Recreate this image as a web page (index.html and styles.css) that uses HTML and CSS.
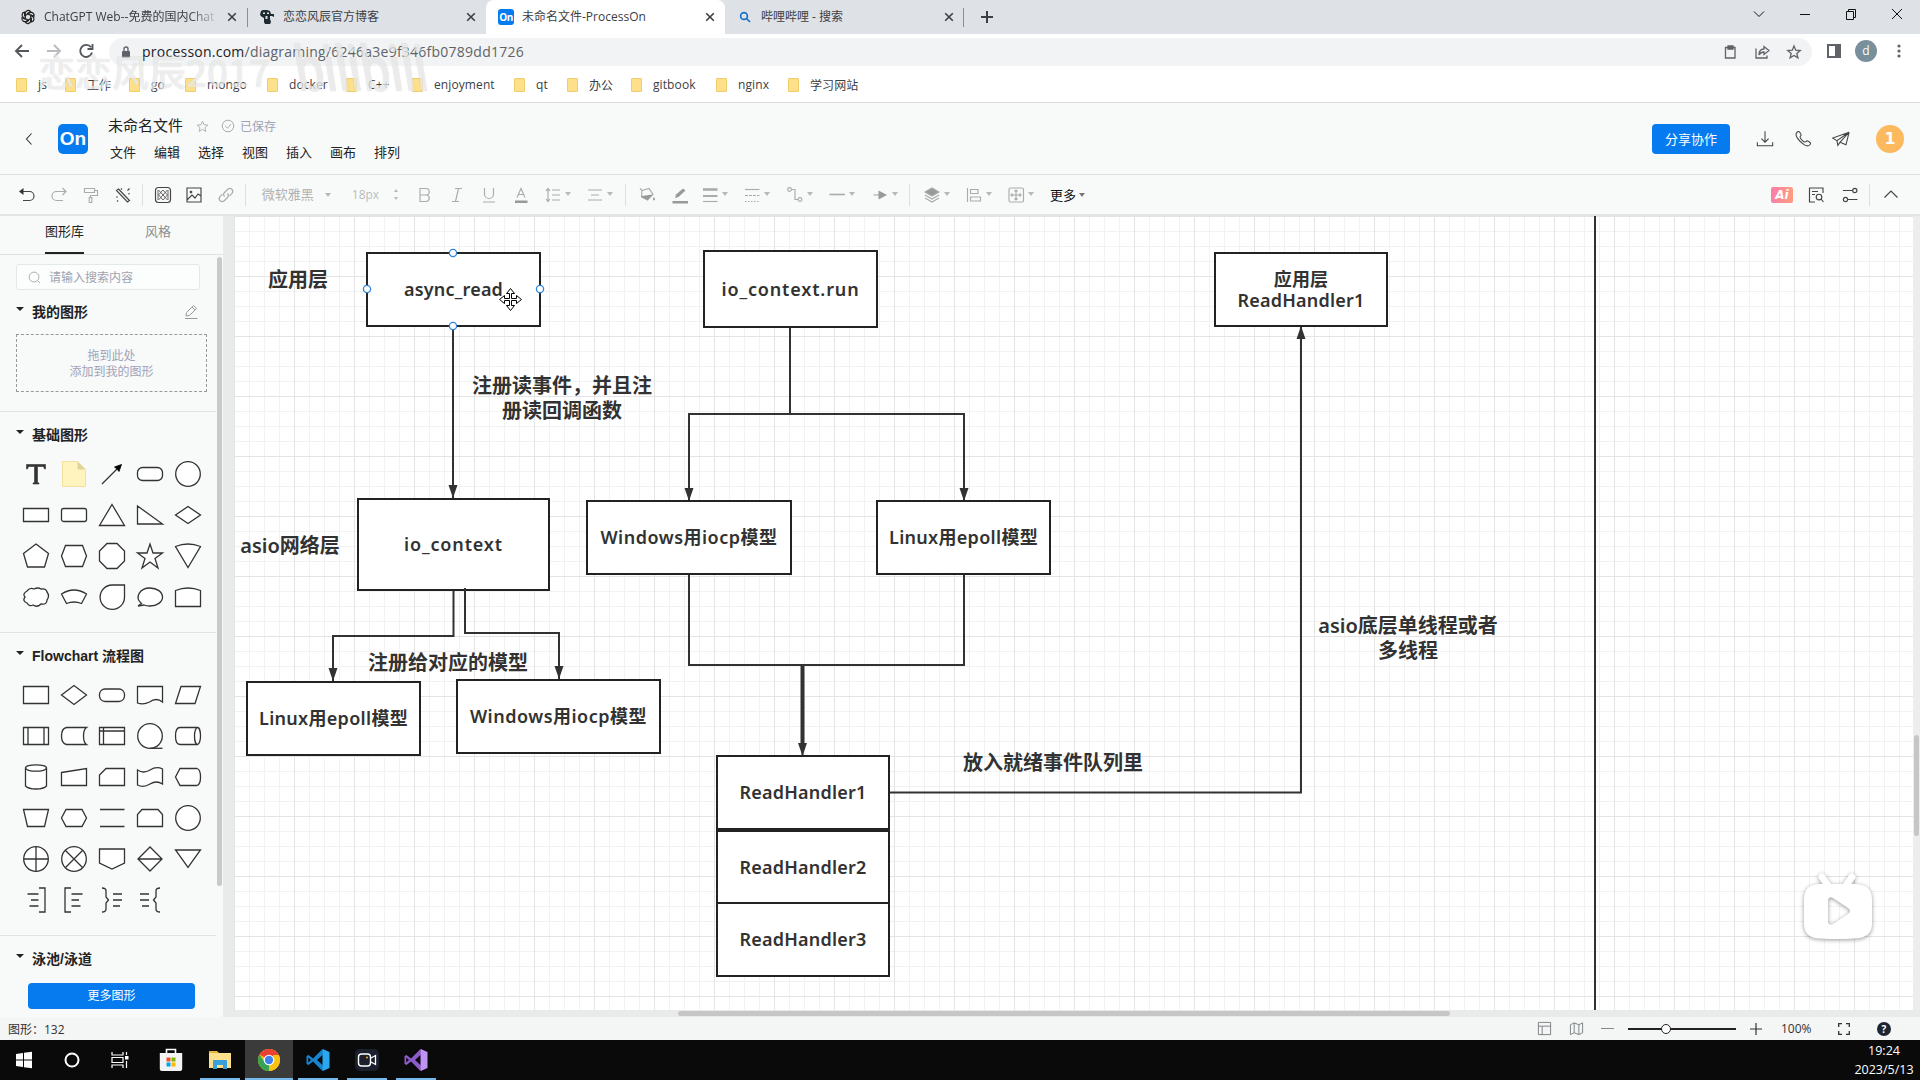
FILE: index.html
```html
<!DOCTYPE html>
<html lang="zh-CN">
<head>
<meta charset="utf-8">
<title>未命名文件-ProcessOn</title>
<link rel="stylesheet" href="styles.css">
</head>
<body>
<div class="screen">
  <div class="tabstrip">
    <div class="tab">
      <svg class="fav" viewBox="0 0 16 16"><g class="dark" stroke-width="1.2"><path id="petal" d="M5.300 9.500V4.300a2.900 2.900 0 0 1 5.200-1.700L7 4.700"/><use href="#petal" transform="rotate(60 8 8)"/><use href="#petal" transform="rotate(120 8 8)"/><use href="#petal" transform="rotate(180 8 8)"/><use href="#petal" transform="rotate(240 8 8)"/><use href="#petal" transform="rotate(300 8 8)"/></g></svg>
      <span class="tab-title fade">ChatGPT Web--免费的国内Chat</span>
      <svg class="close" viewBox="0 0 10 10"><path d="M1.200 1.200l7.600 7.600M8.800 1.200L1.200 8.800"/></svg>
    </div>
    <div class="tab divided">
      <svg class="fav" viewBox="0 0 16 16"><path fill="#1d2a30" d="M2 2l2-1h4l3 1 1 3 3 0v3l-2-1-2 0 0 3 1 3-1 2H6l-1-2V9L3 8 1 6z"/><path fill="#dee1e6" d="M4 3.500h2v1.500H4zM8 3.500h2v1.500H8zM6.500 7h2v3h-2z"/></svg>
      <span class="tab-title">恋恋风辰官方博客</span>
      <svg class="close" viewBox="0 0 10 10"><path d="M1.200 1.200l7.600 7.600M8.800 1.200L1.200 8.800"/></svg>
    </div>
    <div class="tab active">
      <span class="fav on-mini">On</span>
      <span class="tab-title">未命名文件-ProcessOn</span>
      <svg class="close" viewBox="0 0 10 10"><path d="M1.200 1.200l7.600 7.600M8.800 1.200L1.200 8.800"/></svg>
    </div>
    <div class="tab last">
      <svg class="fav" viewBox="0 0 16 16"><g fill="none" stroke="#1a73c8" stroke-width="1.7"><circle cx="7" cy="7" r="3.400"/><path d="M9.500 9.500l3.500 3.500"/></g></svg>
      <span class="tab-title">哔哩哔哩 - 搜索</span>
      <svg class="close" viewBox="0 0 10 10"><path d="M1.200 1.200l7.600 7.600M8.800 1.200L1.200 8.800"/></svg>
    </div>
    <svg class="newtab" viewBox="0 0 14 14"><path d="M7 1v12M1 7h12" stroke="#3c4043" stroke-width="2"/></svg>
    <div class="winctl">
      <svg viewBox="0 0 12 12"><path d="M1 3.500l5 5 5-5"/></svg>
      <svg viewBox="0 0 12 12"><path d="M1 6.500h10"/></svg>
      <svg viewBox="0 0 12 12"><path d="M1.500 3.500h7v8h-7zM3.500 3.500v-2h7v8h-2"/></svg>
      <svg viewBox="0 0 12 12"><path d="M1 1l10 10M11 1L1 11"/></svg>
    </div>
  </div>

  <div class="navbar">
    <svg class="nav" viewBox="0 0 16 16"><path d="M15 8H2M8 2L2 8l6 6"/></svg>
    <svg class="nav off" viewBox="0 0 16 16"><path d="M1 8h13M8 2l6 6-6 6"/></svg>
    <svg class="nav" viewBox="0 0 16 16"><path d="M13 4.300A6 6 0 1 0 14 9.500M14.500 1v5h-5"/></svg>
    <div class="omnibox">
      <svg class="lock" viewBox="0 0 10 12"><rect x="1" y="5" width="8" height="7" rx="1" fill="#5f6368"/><path d="M3 5V3a2 2 0 0 1 4 0v2" fill="none" stroke="#5f6368" stroke-width="1.400"/></svg>
      <span class="url"><b>processon.com</b>/diagraming/6246a3e9f346fb0789dd1726</span>
      <div class="omni-icons">
        <svg viewBox="0 0 16 16"><path d="M3.500 3.500h9.500v10.500H3.500z"/><path d="M6 2h5v3H6z" fill="#5f6368"/></svg>
        <svg viewBox="0 0 16 16"><path d="M2 4.500V14h11v-2.500M5 11c0-4 2-6 5-6V2.500l5 4-5 4V8c-2 0-4 1-5 3z"/></svg>
        <svg viewBox="0 0 16 16"><path d="M8 2l1.700 4.200 4.500.300-3.400 2.900 1.100 4.400L8 11.400l-3.900 2.400 1.100-4.400L1.800 6.500l4.500-.3z"/></svg>
      </div>
    </div>
    <svg class="panel" viewBox="0 0 14 14"><path fill="#5f6368" d="M0 0h14v14H0zM2 2v10h6V2z" fill-rule="evenodd"/></svg>
    <span class="profile">d</span>
    <svg class="dots" viewBox="0 0 4 14"><circle cx="2" cy="2" r="1.600"/><circle cx="2" cy="7" r="1.600"/><circle cx="2" cy="12" r="1.600"/></svg>
  </div>

  <div class="bookmarks">
    <span><i></i>js</span><span><i></i>工作</span><span><i></i>go</span><span><i></i>mongo</span><span><i></i>docker</span><span><i></i>C++</span><span><i></i>enjoyment</span><span><i></i>qt</span><span><i></i>办公</span><span><i></i>gitbook</span><span><i></i>nginx</span><span><i></i>学习网站</span>
  </div>

  <header class="header">
    <svg class="back" viewBox="0 0 8 12"><path d="M6.500 .500L1.500 6l5 5.500"/></svg>
    <div class="logo">On</div>
    <div class="doc">
      <div class="doc-top">
        <span class="doc-name">未命名文件</span>
        <svg class="star" viewBox="0 0 14 14"><path d="M7 1.300l1.700 3.800 4 .4-3 2.800.9 4L7 10.200l-3.600 2.100.9-4-3-2.800 4-.4z"/></svg>
        <svg class="check" viewBox="0 0 14 14"><circle cx="7" cy="7" r="5.800"/><path d="M4.200 7l2.200 2.200 3.600-4"/></svg>
        <span class="saved">已保存</span>
      </div>
      <nav class="menus"><span>文件</span><span>编辑</span><span>选择</span><span>视图</span><span>插入</span><span>画布</span><span>排列</span></nav>
    </div>
    <div class="header-right">
      <button class="share">分享协作</button>
      <svg class="hicon" viewBox="0 0 20 20"><path d="M10 1.500v12M6 9.500l4 4 4-4M1.500 13.500v4h17v-4"/></svg>
      <svg class="hicon" viewBox="0 0 20 20"><path d="M3.600 2.200c1.200-1 2-.7 2.700.3l1.300 2c.6 1 .4 1.700-.4 2.300-1 .8-.6 1.500.2 2.700 1 1.500 2.200 2.700 3.600 3.500 1 .6 1.600.7 2.300-.2.700-.8 1.500-1 2.400-.400l2 1.500c.9.700.9 1.500 0 2.500-1.500 1.600-3.700 1.600-6.200.1C8.500 14.700 5.600 11.800 3.800 9 2 6.400 1.700 3.900 3.600 2.200z"/></svg>
      <svg class="hicon" viewBox="0 0 20 20"><path d="M19 2.500L.8 9l4.700 2.800zM19 2.500L5.500 11.800l1 5.200 2.500-3.500zM19 2.500l-3.500 14L9 13.500"/></svg>
      <span class="avatar">1</span>
    </div>
  </header>

  <div class="toolbar">
    <div class="cells lead">
      <svg class="ic on" viewBox="0 0 20 20"><path d="M3 6.500h9.500a4 4 0 0 1 0 9H6"/><path d="M2 6.500L6.500 3v7z" fill="#333" stroke="none"/></svg>
      <svg class="ic" viewBox="0 0 20 20"><path d="M17 6.500H7.500a4 4 0 0 0 0 9H14M13.500 3L17 6.500 13.500 10"/></svg>
      <svg class="ic" viewBox="0 0 20 20"><path d="M3.500 3.500h10v4h-10zM13.500 5.500h3v5H9.500v2M8.200 12.500h2.600v5H8.200z"/></svg>
      <svg class="ic on" viewBox="0 0 20 20"><path d="M5.500 4l11 11.500-2 1.500L3.500 5.500zM8 3.500l1 1M14.500 5.500l2-2M3.500 11.500l1 1M4 16.500l1-1M16 8v1.500"/></svg>
    </div>
    <i class="sep"></i>
    <div class="cells mid">
      <svg class="ic on" viewBox="0 0 20 20"><rect x="2.500" y="2.500" width="15" height="15" rx="3"/><path stroke-width=".8" d="M5.500 5l9 10M10 5l4.500 5M5.500 10l4.500 5M14.500 5l-9 10M10 5l-4.500 5M14.500 10L10 15M5 5v10M15 5v10"/></svg>
      <svg class="ic on" viewBox="0 0 20 20"><path d="M3 3h14v14H3zM3 15l5-5 3 3 3-4 3 2"/><circle cx="7" cy="7" r=".8"/></svg>
      <svg class="ic" viewBox="0 0 20 20"><path d="M8.500 11.500c-1.500-1.500-1-3 0-4l3-3c3-3 7 1 4.500 3.800l-2.500 2.500M11.500 8.500c1.500 1.500 1 3 0 4l-3 3c-3 3-7-1-4.500-3.800l2.500-2.500"/></svg>
    </div>
    <i class="sep"></i>
    <span class="font-name">微软雅黑</span><i class="caret c-font"></i>
    <span class="font-size">18px</span>
    <span class="spin"><i></i><i></i></span>
    <div class="cells text">
      <svg class="ic" viewBox="0 0 20 20"><path d="M5 3.500h6a3.200 3.200 0 0 1 0 6.500H5zM5 10h6.500a3.300 3.300 0 0 1 0 6.500H5z"/></svg>
      <svg class="ic" viewBox="0 0 20 20"><path d="M8 3.500h7M5 16.500h7M11.500 3.500l-3 13"/></svg>
      <svg class="ic" viewBox="0 0 20 20"><path d="M5.500 3v6a4.500 4.500 0 0 0 9 0V3M4 17h12"/></svg>
      <svg class="ic" viewBox="0 0 20 20"><path d="M6 12.500l4-9 4 9M7.500 9.500h5"/><path d="M4 15.500h12.500v2.500H4z" fill="#999" stroke="none"/></svg>
    </div>
    <div class="cells drop d1">
      <span><svg class="ic" viewBox="0 0 20 20"><path d="M5 4v12M3 6l2-2.500L7 6M3 14l2 2.500L7 14M9 5h8M9 10h8M9 15h8"/></svg><i class="caret"></i></span>
      <span><svg class="ic" viewBox="0 0 20 20"><path d="M3 5h14M6 10h8M3 15h14"/></svg><i class="caret"></i></span>
    </div>
    <i class="sep"></i>
    <div class="cells fill">
      <svg class="ic" viewBox="0 0 20 20"><path d="M5 5.500l7-2 4 6-5.500 5.500-6-3zM5 5.500L3 3.500"/><path d="M4.500 11l11-1.500-5 5.500-6-3zM17 12q2 3 0 3.500-2-.5 0-3.500z" fill="#999" stroke="none"/></svg>
      <svg class="ic" viewBox="0 0 20 20"><path d="M5 13l1-3.500 7-6 2.500 2-7 6.500z" fill="#999" stroke="none"/><path d="M2.500 16h15.500v2.500H2.500z" fill="#999" stroke="none"/></svg>
    </div>
    <div class="cells drop d2">
      <span><svg class="ic" viewBox="0 0 20 20"><path d="M3 4.500h14.500" stroke-width="2.600"/><path d="M3 11h14.500" stroke-width="2"/><path d="M3 16.500h14.500"/></svg><i class="caret"></i></span>
      <span><svg class="ic" viewBox="0 0 20 20"><path d="M3 4.500h14.500"/><path d="M3 10.500h14.500" stroke-dasharray="3 1"/><path d="M3 16.500h14.500" stroke-dasharray="1.500 1.500"/></svg><i class="caret"></i></span>
      <span><svg class="ic" viewBox="0 0 20 20"><circle cx="4.500" cy="4.500" r="1.900"/><circle cx="15" cy="14.500" r="1.900"/><path d="M6.500 4.500H10v10h3"/></svg><i class="caret"></i></span>
      <span><svg class="ic" viewBox="0 0 20 20"><path d="M2.500 9.500h15.500" stroke-width="1.600"/></svg><i class="caret"></i></span>
      <span><svg class="ic" viewBox="0 0 20 20"><path d="M3.500 10H10"/><path d="M8.500 5.500L17 10l-8.500 4.500z" fill="#999" stroke="none"/></svg><i class="caret"></i></span>
    </div>
    <i class="sep s-last"></i>
    <div class="cells drop d3">
      <span><svg class="ic" viewBox="0 0 20 20"><path d="M10 3l7 4-7 4-7-4z" fill="#999"/><path d="M3 10l7 4 7-4M3 13l7 4 7-4"/></svg><i class="caret"></i></span>
      <span><svg class="ic" viewBox="0 0 20 20"><path d="M3.500 3v14M6.500 4.500h7.500v4H6.500zM6.500 12h10v4h-10z"/></svg><i class="caret"></i></span>
      <span><svg class="ic" viewBox="0 0 20 20"><rect x="3" y="3" width="14.500" height="14" rx="1.500"/><path d="M10 5v10M5 10h10M8.500 6.500L10 5l1.500 1.500M8.500 13.500L10 15l1.500-1.500M6.500 8.500L5 10l1.500 1.500M13.500 8.500L15 10l-1.500 1.500"/></svg><i class="caret"></i></span>
    </div>
    <span class="more">更多</span><i class="caret c-more"></i>
    <div class="tool-right">
      <span class="ai">Ai</span>
      <svg class="ic on" viewBox="0 0 20 20"><path d="M9 17H3.500V3h13.500v5M6 6.500h6M6 9.500h3"/><circle cx="13" cy="12" r="2.800"/><path d="M15 14l2.500 3"/></svg>
      <svg class="ic on" viewBox="0 0 20 20"><path d="M3 5.500h9.500M8 14.500h9.500"/><circle cx="14.800" cy="5.500" r="2.100"/><circle cx="5.500" cy="14.500" r="2.100"/></svg>
      <i class="sep"></i>
      <svg class="ic on" viewBox="0 0 20 20"><path d="M3.500 12.500L10 6l6.500 6.500"/></svg>
    </div>
  </div>

  <div class="workspace">
    <aside class="sidebar">
      <div class="side-tabs"><span class="cur">图形库</span><span>风格</span></div>
      <div class="side-body">
        <div class="search"><svg viewBox="0 0 14 14"><circle cx="6.500" cy="6.500" r="5.300"/><path d="M10.500 10.500l2.500 2.500"/></svg>请输入搜索内容</div>
        <section class="mine">
          <h3><i></i>我的图形<svg viewBox="0 0 14 16"><path d="M2 12l.5-3.500L9.500 1.500l3 3L5.500 11.500zM8 3l3 3M1 14.500h12.500"/></svg></h3>
          <div class="dropzone">拖到此处<br>添加到我的图形</div>
        </section>
        <section class="shapes">
          <h3><i></i>基础图形</h3>
          <div class="grid">
            <svg viewBox="0 0 30 30"><path d="M5.500 5.500h19v4.500h-1l-1-2.500h-6v16l1.500.5v1h-6v-1l1.500-.5v-16h-6l-1 2.500h-1z" fill="#333" stroke="#333" stroke-width=".6"/></svg>
            <svg viewBox="0 0 30 30"><path d="M3.500 2.500h15l8 8v17h-23z" fill="#fff4bd" stroke="#f3dfa0" stroke-width="1"/><path d="M18.500 2.500v8h8z" fill="#e0d49a" stroke="none"/></svg>
            <svg viewBox="0 0 30 30"><path d="M5 25L20 10"/><path d="M24.500 5.500l-2.500 7-2-2.500-2.500-2z" fill="#000" stroke="#000" stroke-width=".8"/></svg>
            <svg viewBox="0 0 30 30"><rect x="2.500" y="8.500" width="25" height="13" rx="5"/></svg>
            <svg viewBox="0 0 30 30"><circle cx="15" cy="15" r="12.300"/></svg>
            <svg viewBox="0 0 30 30"><path d="M2.500 8.500h25v13h-25z"/></svg>
            <svg viewBox="0 0 30 30"><rect x="2.500" y="8.500" width="25" height="13" rx="2"/></svg>
            <svg viewBox="0 0 30 30"><path d="M15 4.500L27.500 25.500h-25z"/></svg>
            <svg viewBox="0 0 30 30"><path d="M2.500 6v18h25z"/></svg>
            <svg viewBox="0 0 30 30"><path d="M2.500 15L15 6.500 27.500 15 15 23.500z"/></svg>
            <svg viewBox="0 0 30 30"><path d="M15 3l12.500 9.500L23.500 26h-17l-4-13.500z"/></svg>
            <svg viewBox="0 0 30 30"><path d="M6.500 4.500h17l4 10.500-4 10.500h-17L2.500 15z"/></svg>
            <svg viewBox="0 0 30 30"><path d="M10 2.500h10l7.500 7.500v10L20 27.500H10L2.500 20V10z"/></svg>
            <svg viewBox="0 0 30 30"><path d="M15 3l3 9h9.500l-7.500 5.500 3 9.500-8-6-8 6 3-9.500L2.500 12H12z"/></svg>
            <svg viewBox="0 0 30 30"><path d="M2.500 5.500q12.500-5 25 0L15 26.500z"/></svg>
            <svg viewBox="0 0 30 30"><path d="M6 9q3-4 7-2 4-2 7 0 5-1 6 3 3 4 0 8 0 5-6 4-4 4-8 1-4 2-6-2-5-2-2-6-3-3 2-6z"/></svg>
            <svg viewBox="0 0 30 30"><path d="M2.500 12q12.500-8 25 0l-5 9.500q-7.500-3-15 0z"/></svg>
            <svg viewBox="0 0 30 30"><path d="M27.500 3H15A12.200 12.200 0 1 0 27.500 15z"/></svg>
            <svg viewBox="0 0 30 30"><path d="M6.500 21.500C-1 15 5 6 15 6c7 0 12.500 4 12.500 9S22 24 15 24q-4 0-6-1l-6 1z"/></svg>
            <svg viewBox="0 0 30 30"><path d="M2.500 24.500V8.500q12.500-5 25 0v16z"/></svg>
          </div>
        </section>
        <section class="shapes">
          <h3><i></i>Flowchart 流程图</h3>
          <div class="grid">
            <svg viewBox="0 0 30 30"><path d="M2.500 6.500h25v17h-25z"/></svg>
            <svg viewBox="0 0 30 30"><path d="M2.500 15L15 5.500 27.500 15 15 24.500z"/></svg>
            <svg viewBox="0 0 30 30"><rect x="2.500" y="9" width="25" height="12.500" rx="5.500"/></svg>
            <svg viewBox="0 0 30 30"><path d="M2.500 23V6.500h25V22q-6-5-13 0-6 3-12 1z"/></svg>
            <svg viewBox="0 0 30 30"><path d="M8 6.500h19.500L22 23.500H2.500z"/></svg>
            <svg viewBox="0 0 30 30"><path d="M2.500 6.500h25v17h-25zM7 6.500v17M23 6.500v17"/></svg>
            <svg viewBox="0 0 30 30"><path d="M27.500 6.500h-20q-5 1-5 8.500t5 8.500h20q-3-2-3-8.500t3-8.500z"/></svg>
            <svg viewBox="0 0 30 30"><path d="M2.500 6.500h25v17h-25zM6.500 6.500v17M2.500 10h25"/></svg>
            <svg viewBox="0 0 30 30"><circle cx="15" cy="15" r="12.300"/><path d="M15 27.300h12.500"/></svg>
            <svg viewBox="0 0 30 30"><path d="M24.500 6.500H7q-4.500 0-4.500 8.500T7 23.500h17.500"/><ellipse cx="24.500" cy="15" rx="3" ry="8.500"/></svg>
            <svg viewBox="0 0 30 30"><path d="M4.500 6v18q3 3 10.500 3t10.500-3V6"/><ellipse cx="15" cy="6" rx="10.500" ry="3.200"/></svg>
            <svg viewBox="0 0 30 30"><path d="M2.500 10.500l25-4v17h-25z"/></svg>
            <svg viewBox="0 0 30 30"><path d="M9 6.500h18.500v17h-25V13z"/></svg>
            <svg viewBox="0 0 30 30"><path d="M2.500 8q6 4 12.500 0t12.500-1v15q-6-4-12.500 0t-12.500 1z"/></svg>
            <svg viewBox="0 0 30 30"><path d="M7 6.500h17q3.500 1 3.500 8.500T24 23.500H7L2.500 15z"/></svg>
            <svg viewBox="0 0 30 30"><path d="M2.500 6.500h25l-4 17h-17z"/></svg>
            <svg viewBox="0 0 30 30"><path d="M7 6.500h16l4.500 8.500-4.500 8.500H7L2.500 15z"/></svg>
            <svg viewBox="0 0 30 30"><path d="M3 6.500h24.500M3 23.500h24.500"/></svg>
            <svg viewBox="0 0 30 30"><path d="M7 6.500h16l4.500 5v12h-25v-12z"/></svg>
            <svg viewBox="0 0 30 30"><circle cx="15" cy="15" r="12.300"/></svg>
            <svg viewBox="0 0 30 30"><circle cx="15" cy="15" r="12.300"/><path d="M15 2.700v24.600M2.700 15h24.600"/></svg>
            <svg viewBox="0 0 30 30"><circle cx="15" cy="15" r="12.300"/><path d="M6.500 6.500l17 17M23.500 6.500l-17 17"/></svg>
            <svg viewBox="0 0 30 30"><path d="M2.500 5h25v14L15 25 2.500 19z"/></svg>
            <svg viewBox="0 0 30 30"><path d="M3 15L15 3l12 12-12 12zM3 15h24"/></svg>
            <svg viewBox="0 0 30 30"><path d="M2.500 6h25L15 23.500z"/></svg>
            <svg viewBox="0 0 30 30"><path d="M18 3h6v24h-6M6.500 9h11M10 15h7.500M8.500 21h9" fill="none"/></svg>
            <svg viewBox="0 0 30 30"><path d="M12 3H6v24h6M12.500 9h11M12.500 15h7.500M12.500 21h9" fill="none"/></svg>
            <svg viewBox="0 0 30 30"><path d="M5 3q4 0 4 3v6l2.500 3L9 18v6q0 3-4 3M16 9h9M16 15h9M16 21h7" fill="none"/></svg>
            <svg viewBox="0 0 30 30"><path d="M25 3q-4 0-4 3v6l-2.500 3 2.500 3v6q0 3 4 3M5 9h9M5 15h9M7 21h7" fill="none"/></svg>
          </div>
        </section>
        <section class="pool"><h3><i></i>泳池/泳道</h3></section>
        <button class="more-shapes">更多图形</button>
      </div>
      <div class="side-scroll"></div>
    </aside>

    <div class="stage">
      <div class="canvas">
        <div class="plane">
          <svg class="wires" viewBox="0 0 1920 1080">
            <defs><marker id="a" markerUnits="userSpaceOnUse" markerWidth="14" markerHeight="10" refX="13" refY="5" orient="auto"><path d="M0 .5L13 5 0 9.500z" fill="#323232"/></marker></defs>
            <path d="M1595 200v820"/>
            <path d="M453 327V498" marker-end="url(#a)"/>
            <path d="M790 328v86M790 414H689V501" marker-end="url(#a)"/>
            <path d="M790 414H964V501" marker-end="url(#a)"/>
            <path d="M689 574v91H964V574"/>
            <path class="thick" d="M802.500 665v79"/>
            <path d="M802.500 740v16" marker-end="url(#a)"/>
            <path d="M453.500 590v46H333v45" marker-end="url(#a)"/>
            <path d="M465 588v45h94v46" marker-end="url(#a)"/>
            <path d="M889 792.500H1301V326" marker-end="url(#a)"/>
          </svg>
          <div class="node n1">async_read</div>
          <div class="node n2">io_context.run</div>
          <div class="node n3"><span>应用层<br>ReadHandler1</span></div>
          <div class="node n4">io_context</div>
          <div class="node n5 win">Windows用iocp模型</div>
          <div class="node n6 lin">Linux用epoll模型</div>
          <div class="node n7 lin">Linux用epoll模型</div>
          <div class="node n8 win">Windows用iocp模型</div>
          <div class="node n9">ReadHandler1</div>
          <div class="node n10">ReadHandler2</div>
          <div class="node n11">ReadHandler3</div>
          <div class="label l1">应用层</div>
          <div class="label l2">注册读事件，并且注<br>册读回调函数</div>
          <div class="label l3">asio网络层</div>
          <div class="label l4">注册给对应的模型</div>
          <div class="label l5">asio底层单线程或者<br>多线程</div>
          <div class="label l6">放入就绪事件队列里</div>
          <svg class="over" viewBox="0 0 1920 1080">
            <path d="M465 588v6" stroke="#323232" stroke-width="2"/>
            <g fill="#fff" stroke="#2f86dc" stroke-width="1.300"><circle cx="453" cy="253" r="3.600"/><circle cx="453" cy="326" r="3.600"/><circle cx="367" cy="289" r="3.600"/><circle cx="540" cy="289" r="3.600"/></g>
            <path d="M510.500 288.500l4 5h-3v5h5v-3l5 4-5 4v-3h-5v5h3l-4 5-4-5h3v-5h-5v3l-5-4 5-4v3h5v-5h-3z" fill="#fff" stroke="#000" stroke-width="1"/>
          </svg>
          <svg class="tv" viewBox="0 0 80 80"><path d="M24 9l7 10M54 9l-7 10" stroke="#fff" stroke-width="7" stroke-linecap="round"/><path d="M22 16h34q18 0 18 15v25q0 14-18 14.500-17 1-34 0Q6 70 6 56V31q0-15 16-15zM30 32v22q1 4 5 2l15-10q4-3 0-6L35 30q-4-2-5 2z" fill="#fff" fill-rule="evenodd"/></svg>
        </div>
      </div>
      <div class="vtrack"><i></i></div>
      <div class="htrack"><i></i></div>
    </div>
  </div>

  <footer class="status">
    <span class="count">图形：132</span>
    <svg class="s-ic" viewBox="0 0 16 16"><path d="M1.500 1.500h13v13h-13zM1.500 5.500h13M5.500 5.500v9"/></svg>
    <svg class="s-ic map" viewBox="0 0 16 16"><path d="M1.500 4l4-2 5 2 4-2v10.500l-4 2-5-2-4 2zM5.500 2v10.500M10.500 4v10.500"/></svg>
    <i class="minus"></i>
    <div class="slider"><i></i></div>
    <svg class="plus" viewBox="0 0 12 12"><path d="M6 0v12M0 6h12"/></svg>
    <span class="zoom">100%</span>
    <svg class="full" viewBox="0 0 12 12"><path d="M.7 4V.7H4M8 .7h3.300V4M11.300 8v3.300H8M4 11.300H.7V8"/></svg>
    <span class="help">?</span>
  </footer>

  <div class="taskbar">
    <span class="app w1"><svg viewBox="0 0 24 24"><path fill="#fff" d="M4 6l7-1v6.500H4zM12 4.800l8-1.100v7.800h-8zM4 12.500h7V19l-7-1zM12 12.500h8v7.800l-8-1.100z"/></svg></span>
    <span class="app w2"><svg viewBox="0 0 24 24"><circle cx="12" cy="12" r="6.500" fill="none" stroke="#fff" stroke-width="2"/></svg></span>
    <span class="app w3"><svg viewBox="0 0 24 24"><path fill="none" stroke="#fff" stroke-width="1.200" d="M4 4v3h11V4M4 20v-3h11v3M4 9.500h11v5H4zM18.500 4v3M18.500 13v7"/><path fill="#fff" d="M17 8h3.500v3.500H17z"/></svg></span>
    <span class="app w4"><svg viewBox="0 0 24 24"><path d="M7.500 5V1.500h9V5" fill="none" stroke="#fff" stroke-width="1.600"/><path fill="#f3f3f3" d="M.8 5h22.400v16q0 2-2 2H2.800q-2 0-2-2z"/><path fill="#f25022" d="M7.500 9.500h4v4h-4z"/><path fill="#7fba00" d="M12.500 9.500h4v4h-4z"/><path fill="#00a4ef" d="M7.500 14.500h4v4h-4z"/><path fill="#ffb900" d="M12.500 14.500h4v4h-4z"/></svg></span>
    <span class="app run w5"><svg viewBox="0 0 24 24"><path fill="#e8b53a" d="M1 3h8l2 2v4H1z"/><path fill="#ffe08a" d="M1 5h22v15H1z"/><path fill="#3aa0dc" d="M5 21v-8q0-1 1-1h12q1 0 1 1v8h-4v-4H9v4z"/></svg></span>
    <span class="app run cur w6"><svg viewBox="0 0 24 24"><circle cx="12" cy="12" r="11" fill="#fbc116"/><path fill="#e94235" d="M12 12L2.500 6.500a11 11 0 0 1 19 0z"/><path fill="#34a353" d="M12 12l0 11A11 11 0 0 1 2.500 6.500L7.500 14z"/><path fill="#fbc116" d="M12 23l5-8.500L16 7h5.800A11 11 0 0 1 12 23z"/><circle cx="12" cy="12" r="5.300" fill="#fff"/><circle cx="12" cy="12" r="4.200" fill="#3f82ee"/></svg></span>
    <span class="app run w7"><svg viewBox="0 0 24 24"><path d="M17 1v22l-1-.5L7 13.500 2.500 17 .5 16V8l2-1L7 10.500 16 1.500zM16.500 7L11 12l5.500 5zM2.300 9.500v5L5 12z" fill="#1784cf" fill-rule="evenodd"/><path fill="#2ba7ee" d="M16.800 1L23.500 4v16l-6.700 3z"/></svg></span>
    <span class="app run w8"><svg viewBox="0 0 24 24"><rect x="0" y="1" width="24" height="22" rx="5" fill="#1c202c"/><rect x="3.500" y="6" width="12" height="12" rx="3" fill="none" stroke="#fff" stroke-width="1.400"/><path d="M16 10l4.500-2.500v9L16 14" fill="none" stroke="#fff" stroke-width="1.300"/><circle cx="12" cy="9.500" r="1" fill="#f5a623"/></svg></span>
    <span class="app run w9"><svg viewBox="0 0 24 24"><path d="M17 1v22l-1-.5L7 13.500 2.500 17 .5 16V8l2-1L7 10.500 16 1.500zM16.500 7L11 12l5.500 5zM2.300 9.500v5L5 12z" fill="#8d5cc9" fill-rule="evenodd"/><path fill="#bd94f2" d="M16.800 1L23.500 4v16l-6.700 3z"/></svg></span>
    <div class="clock">19:24<br>2023/5/13</div>
  </div>

  <div class="wm-name">恋恋风辰2017</div>
  <div class="wm-brand">bilibili</div>
</div>
</body>
</html>
```
FILE: styles.css
```css
* { box-sizing: border-box; }
body {
  margin: 0;
  font-family: "Open Sans", "Noto Sans CJK SC", sans-serif;
  font-size: 12px;
  color: #333;
}
i { font-style: normal; display: block; flex: none; }
svg { flex: none; display: block; fill: none; }
button { border: 0; padding: 0; font: inherit; color: #fff; background: #067bef; border-radius: 4px; }
.screen {
  position: relative;
  width: 1920px; height: 1080px;
  overflow: hidden;
  display: flex; flex-direction: column;
  background: #fff;
}
.screen > * { flex: none; }

/* browser tabs */
.tabstrip { height: 34px; background: #dee1e6; display: flex; align-items: stretch; padding-left: 8px; }
.tab { position: relative; width: 239px; height: 34px; padding: 0 10px 0 12px; display: flex; align-items: center; }
.tab.divided::before, .tab.last::after {
  content: ""; position: absolute; left: 0; top: 8px; width: 1px; height: 19px; background: #8a8d91;
}
.tab.last::after { left: auto; right: 0; }
.tab.active { background: #fff; border-radius: 8px 8px 0 0; }
.fav { width: 16px; height: 16px; flex: none; }
.dark { stroke: #222; fill: none; }
.on-mini { background: #067bef; color: #fff; border-radius: 3px; font: 700 10px/16px "Open Sans", sans-serif; text-align: center; letter-spacing: -.4px; }
.tab-title { flex: 1; margin-left: 8px; white-space: nowrap; line-height: 18px; color: #3c4043; }
.tab-title.fade { flex: 0 0 176px; -webkit-mask-image: linear-gradient(90deg, #000 83%, transparent); mask-image: linear-gradient(90deg, #000 83%, transparent); }
.close { width: 10px; height: 10px; margin-left: auto; stroke: #3c4043; stroke-width: 1.6; }
.newtab { width: 14px; height: 14px; margin: 10px 0 0 16px; }
.winctl { margin-left: auto; display: flex; gap: 34px; padding: 8px 17px 0 0; }
.winctl svg { width: 12px; height: 12px; stroke: #111; stroke-width: 1; }

/* address bar */
.navbar { height: 34px; display: flex; align-items: center; padding-left: 14px; }
.nav { width: 16px; height: 16px; margin-right: 16px; stroke: #54585c; stroke-width: 1.9; }
.nav.off { stroke: #b9bbbe; }
.omnibox { margin-left: -1px; width: 1703px; height: 28px; border-radius: 14px; background: #f1f3f4; display: flex; align-items: center; padding-left: 12px; margin-top: 2px; }
.lock { width: 10px; height: 12px; }
.url { margin-left: 11px; font-size: 14px; line-height: 20px; color: #5f6368; letter-spacing: .24px; }
.url b { font-weight: 400; color: #202124; }
.omni-icons { margin-left: auto; display: flex; gap: 16px; padding-right: 10px; }
.omni-icons svg { width: 16px; height: 16px; stroke: #5f6368; stroke-width: 1.3; }
.panel { width: 14px; height: 14px; margin-left: 15px; }
.profile { width: 22px; height: 22px; border-radius: 50%; background: #78909c; color: #fff; text-align: center; font-size: 12px; line-height: 21px; margin-left: 14px; }
.dots { width: 4px; height: 14px; fill: #5f6368; margin-left: 20px; }

/* bookmarks */
.bookmarks { height: 35px; border-bottom: 1px solid #dadce0; display: flex; align-items: center; padding-left: 16px; white-space: nowrap; color: #3c4043; letter-spacing: .1px; }
.bookmarks span { display: flex; align-items: center; gap: 11px; height: 20px; margin-bottom: 1px; }
.bookmarks i { width: 11px; height: 14px; background: #fee08b; border: 1px solid #f0cd6b; border-radius: 1px; }
.bookmarks span:nth-child(1) { width: 49px; }
.bookmarks span:nth-child(2) { width: 64px; }
.bookmarks span:nth-child(3) { width: 56px; }
.bookmarks span:nth-child(4) { width: 82px; }
.bookmarks span:nth-child(5) { width: 79px; }
.bookmarks span:nth-child(6) { width: 66px; }
.bookmarks span:nth-child(7) { width: 102px; }
.bookmarks span:nth-child(8) { width: 53px; }
.bookmarks span:nth-child(9) { width: 64px; }
.bookmarks span:nth-child(10) { width: 85px; }
.bookmarks span:nth-child(11) { width: 72px; }

/* document header */
.header { height: 72px; background: #f8faf9; border-bottom: 1px solid #e1e3e3; display: flex; align-items: center; padding-left: 25px; }
.back { width: 8px; height: 12px; stroke: #333; stroke-width: 1.1; }
.logo { margin-left: 25px; width: 30px; height: 30px; border-radius: 5px; background: #067bef; color: #fff; font: 700 19px/30px "Liberation Sans", sans-serif; text-align: center; }
.doc { margin-left: 20px; padding-bottom: 2px; }
.doc-top { display: flex; align-items: center; height: 22px; }
.doc-name { font-size: 15px; color: #222; line-height: 22px; }
.star { width: 13px; height: 13px; margin-left: 13px; stroke: #a9abad; margin-top: 3px; }
.check { width: 14px; height: 14px; margin-left: 12px; stroke: #a9abad; margin-top: 3px; }
.saved { color: #9ea3b8; margin-left: 5px; margin-top: 2px; }
.menus { display: flex; gap: 18px; padding-left: 2px; font-size: 13px; line-height: 20px; margin-top: 6px; color: #222; }
.header-right { margin-left: auto; display: flex; align-items: center; padding-right: 16px; }
.share { width: 78px; height: 30px; font-size: 13px; line-height: 28px; margin-right: 26px; }
.hicon { width: 18px; height: 18px; stroke: #444; stroke-width: 1.2; margin-right: 20px; }
.avatar { width: 28px; height: 28px; border-radius: 50%; background: #fdb95e; color: #fff; font: 700 16px/28px "DejaVu Sans", sans-serif; text-align: center; margin-left: 6px; }

/* toolbar */
.toolbar { height: 41px; background: #f8faf9; border-bottom: 2px solid #e3e4e4; display: flex; align-items: center; padding-left: 11px; }
.cells { display: flex; align-items: center; }
.cells > .ic { margin: 0 6px; }
.ic { width: 20px; height: 20px; stroke: #a9abac; stroke-width: 1.15; }
.ic.on { stroke: #444; }
.sep { width: 1px; height: 22px; background: #dcdedf; }
.lead { margin-right: 3px; }
.mid { margin-left: 4px; margin-right: 3px; }
.mid > .ic { margin: 0 5.800px; }
.font-name { margin-left: 16px; font-size: 13px; color: #b0b2b3; line-height: 18px; margin-bottom: 2px; width: 52px; }
.caret { width: 0; height: 0; border: 3px solid transparent; border-top: 4px solid #b6b8b9; border-bottom: 0; }
.c-font { margin-left: 11px; }
.font-size { margin-left: 21px; width: 29px; color: #babcbd; font-size: 12px; white-space: nowrap; }
.spin { display: flex; flex-direction: column; gap: 5px; margin-left: 13px; margin-right: 11px; }
.spin i { border: 2.500px solid transparent; border-bottom: 3px solid #b6b8b9; border-top: 0; }
.spin i + i { border-bottom: 0; border-top: 3px solid #b6b8b9; }
.drop span { display: flex; align-items: center; width: 42px; }
.drop .caret { margin-left: 2px; margin-bottom: 2px; }
.d1 { margin-left: 6px; }
.d1 + .sep { margin-right: 5px; margin-left: -2px; }
.fill { margin-right: 4px; }
.fill > .ic { margin: 0 6.300px; }
.d2 span { width: 42.400px; }
.s-last { margin-left: -3px; margin-right: 12px; }
.more { margin-left: 2px; font-size: 13px; color: #111; }
.c-more { border-top-color: #777; margin-left: 3px; }
.tool-right { margin-left: auto; display: flex; align-items: center; padding-right: 19px; }
.ai { width: 22px; height: 16px; border-radius: 2px; background: linear-gradient(90deg, #f97fa6, #fe9d7f); color: #fff; font: italic 700 12px/16px "DejaVu Sans", sans-serif; text-align: center; margin-right: 13px; }
.tool-right .ic { margin-right: 14px; }
.tool-right .ic:last-child { margin: 0 0 0 11px; }
.tool-right .sep { margin-left: -5px; }

/* workspace */
.workspace { height: 801px; display: flex; background: #e9ebeb; }
.sidebar { position: relative; width: 223px; background: #f8faf9; overflow: hidden; }
.side-tabs { height: 39px; border-bottom: 1px solid #e1e3e3; display: flex; gap: 61px; padding-left: 45px; font-size: 13px; color: #8b8f93; line-height: 31px; }
.side-tabs .cur { color: #222; border-bottom: 2px solid #222; height: 37.500px; }
.side-body { width: 216px; }
.side-scroll { position: absolute; left: 217px; top: 41px; width: 5px; height: 629px; border-radius: 3px; background: #c8caca; }
.search { margin: 9px 0 0 16px; width: 184px; height: 26px; border: 1px solid #e6e8e8; border-radius: 3px; background: #fcfdfd; display: flex; align-items: center; padding-left: 11px; gap: 8px; color: #a0a3b0; }
.search svg { width: 13px; height: 13px; stroke: #a5a8ab; }
.sidebar section { border-bottom: 1px solid #e1e3e3; }
.sidebar h3 { margin: 0; height: 41px; display: flex; align-items: center; font-size: 14px; font-weight: 700; color: #222; padding: 3px 18px 0 16px; font-family: "Liberation Sans", "Noto Sans CJK SC", sans-serif; }
.sidebar h3 i { border: 4px solid transparent; border-top: 4px solid #222; border-bottom: 0; margin-right: 8px; margin-bottom: 4px; }
.sidebar h3 svg { width: 14px; height: 16px; stroke: #999; margin-left: auto; margin-top: 2px; }
.mine { height: 122px; }
.sidebar .mine h3 { height: 40px; padding-top: 1px; }
.dropzone { margin: 4px 0 0 16px; width: 191px; height: 58px; border: 1px dashed #999; text-align: center; color: #a0a3b8; line-height: 16px; padding-top: 13px; }
.grid { display: grid; grid-template-columns: repeat(5, 38px); grid-auto-rows: 41px; padding-left: 17px; place-items: center; height: 179px; align-content: start; }
.grid svg { width: 30px; height: 30px; stroke: #333; stroke-width: 1.3; fill: #fff; }
.shapes + .shapes .grid { height: 261px; }
.sidebar .pool { border: 0; height: 47px; }
.more-shapes { display: block; margin-left: 28px; width: 167px; height: 26px; line-height: 24px; }

.stage { margin-left: 11px; width: 1686px; display: grid; grid-template: 794px 7px / 1679px 7px; }
.canvas {
  position: relative; overflow: hidden; background-color: #fff;
  background-image:
    linear-gradient(90deg, #e4e4e4 1px, transparent 1px),
    linear-gradient(#e4e4e4 1px, transparent 1px),
    linear-gradient(90deg, #f2f2f2 1px, transparent 1px),
    linear-gradient(#f2f2f2 1px, transparent 1px);
  background-size: 60px 60px, 60px 60px, 15px 15px, 15px 15px;
}
.vtrack { background: #eceeee; padding: 519px 1px 0; }
.vtrack i { width: 5px; height: 101px; border-radius: 3px; background: #c6c6c6; }
.htrack { padding: 1px 0 0 444px; }
.htrack i { width: 772px; height: 5px; border-radius: 3px; background: #c6c6c6; }

/* diagram: nodes sit at window coordinates */
.plane { position: absolute; left: -234px; top: -216px; width: 1920px; height: 1080px; }
.wires, .over { position: absolute; left: 0; top: 0; width: 1920px; height: 1080px; }
.wires > path { stroke: #323232; stroke-width: 2; }
.wires > .thick { stroke-width: 4; }
.node {
  position: absolute; background: #fff; border: 2px solid #222;
  display: flex; align-items: center; justify-content: center; text-align: center;
  font: 600 18px/21px "Noto Sans", "Noto Sans CJK SC", sans-serif; color: #323232; white-space: nowrap;
  height: 75px; width: 175px; letter-spacing: .2px;
}
.n1 { left: 366px; top: 252px; }
.n2 { left: 703px; top: 250px; height: 78px; letter-spacing: .85px; }
.n3 { left: 1214px; top: 252px; width: 174px; }
.n4 { left: 357px; top: 498px; width: 193px; height: 93px; letter-spacing: .85px; }
.win { width: 206px; letter-spacing: .5px; }
.lin { letter-spacing: .3px; }
.n5 { left: 586px; top: 500px; }
.n6 { left: 876px; top: 500px; }
.n7 { left: 246px; top: 681px; }
.n8 { left: 456px; top: 679px; width: 205px; }
.n9 { left: 716px; top: 755px; width: 174px; }
.n10 { left: 716px; top: 830px; width: 174px; }
.n11 { left: 716px; top: 902px; width: 174px; }
.label { position: absolute; transform: translate(-50%, -50%); text-align: center; white-space: nowrap; font: 600 20px/25px "Noto Sans", "Noto Sans CJK SC", sans-serif; color: #323232; }
.l1 { left: 298px; top: 279px; }
.l2 { left: 562px; top: 398px; }
.l3 { left: 290px; top: 545px; }
.l4 { left: 448px; top: 662px; }
.l5 { left: 1408px; top: 638px; }
.l6 { left: 1053px; top: 762px; }
.tv { position: absolute; left: 1798px; top: 868px; width: 80px; height: 80px; filter: drop-shadow(0 1px 2px rgba(0, 0, 0, .4)); }

/* status bar */
.status { height: 23px; background: #f4f5f5; display: flex; align-items: center; padding-left: 8px; }
.count { margin-right: auto; }
.s-ic { width: 15px; height: 15px; stroke: #7b7f82; }
.map { margin-left: 17px; }
.minus { width: 13px; height: 1.500px; background: #888; margin-left: 17px; }
.slider { position: relative; width: 108px; height: 2px; background: #222; margin-left: 14px; }
.slider i { position: absolute; left: 33px; top: -4px; width: 10px; height: 10px; border-radius: 50%; border: 1px solid #222; background: #fff; }
.plus { width: 12px; height: 12px; stroke: #333; stroke-width: 1.2; margin-left: 14px; }
.zoom { width: 32px; margin-left: 19px; }
.full { width: 12px; height: 12px; stroke: #333; stroke-width: 1.3; margin-left: 25px; }
.help { width: 14px; height: 14px; border-radius: 50%; background: #1d2630; color: #fff; font: 700 10px/14px "Open Sans", sans-serif; text-align: center; margin: 0 29px 0 27px; }

/* taskbar */
.taskbar { height: 40px; background: #0a0a0a; display: flex; padding-left: 3px; }
.app { width: 42px; display: flex; align-items: center; justify-content: center; border-bottom: 2px solid transparent; padding-top: 2px; }
.app svg { width: 24px; height: 24px; }
.run { border-bottom-color: #76b9ed; width: 40px; }
.w2 { margin-left: 6px; }
.w3 { margin-left: 6px; }
.w4 { margin-left: 6px; width: 48px; }
.w5 { margin-left: 5px; }
.cur.app { width: 48px; background: #3b3b3b; margin-left: 5px; }
.w7 { margin-left: 5px; }
.w8, .w9 { margin-left: 9px; }
.clock { margin-left: auto; width: 72px; text-align: center; color: #fff; font-size: 12.500px; line-height: 19px; padding-top: 1px; white-space: nowrap; }

/* video overlay marks */
.wm-name, .wm-brand { position: absolute; color: rgba(255, 255, 255, .68); text-shadow: 0 0 1px rgba(0, 0, 0, .2); white-space: nowrap; }
.wm-name { left: 38px; top: 46px; font: 500 37px/50px "Noto Sans CJK SC", sans-serif; }
.wm-brand { left: 294px; top: 36px; font: 600 48px/64px "Open Sans", sans-serif; letter-spacing: -1px; transform: skewX(9deg) scaleY(1.3); color: rgba(246, 246, 246, .72); }
```
